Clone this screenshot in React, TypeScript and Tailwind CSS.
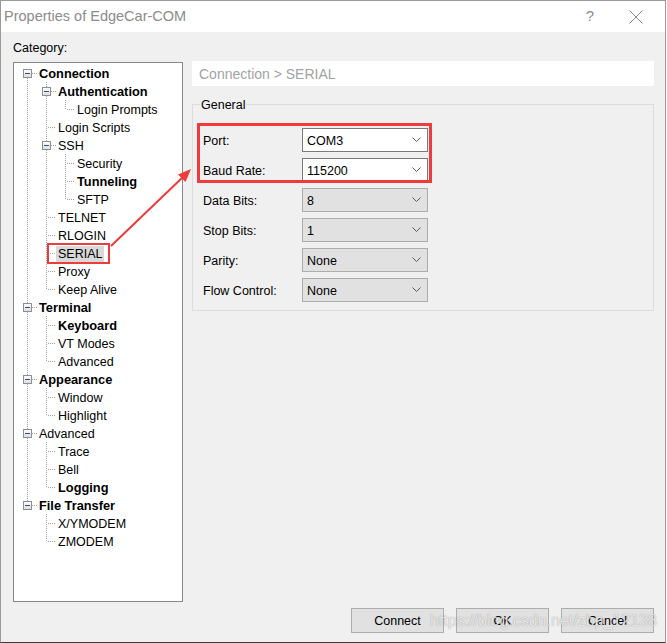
import React from "react";

type Node = { label: string; bold?: boolean; selected?: boolean; children?: Node[] };

const tree: Node[] = [
  {
    label: "Connection",
    bold: true,
    children: [
      { label: "Authentication", bold: true, children: [{ label: "Login Prompts" }] },
      { label: "Login Scripts" },
      { label: "SSH", children: [{ label: "Security" }, { label: "Tunneling", bold: true }, { label: "SFTP" }] },
      { label: "TELNET" },
      { label: "RLOGIN" },
      { label: "SERIAL", selected: true },
      { label: "Proxy" },
      { label: "Keep Alive" },
    ],
  },
  { label: "Terminal", bold: true, children: [{ label: "Keyboard", bold: true }, { label: "VT Modes" }, { label: "Advanced" }] },
  { label: "Appearance", bold: true, children: [{ label: "Window" }, { label: "Highlight" }] },
  { label: "Advanced", children: [{ label: "Trace" }, { label: "Bell" }, { label: "Logging", bold: true }] },
  { label: "File Transfer", bold: true, children: [{ label: "X/YMODEM" }, { label: "ZMODEM" }] },
];

type Row = {
  node: Node;
  level: number;
  guides: boolean[];
  top: boolean;
  bottom: boolean;
  expander: boolean;
};

function flatten(nodes: Node[], level: number, guides: boolean[], out: Row[]) {
  nodes.forEach((n, i) => {
    const isLast = i === nodes.length - 1;
    const isFirstRoot = level === 0 && i === 0;
    out.push({
      node: n,
      level,
      guides,
      top: !isFirstRoot,
      bottom: !isLast,
      expander: !!n.children,
    });
    if (n.children) flatten(n.children, level + 1, [...guides, !isLast], out);
  });
  return out;
}

const rows = flatten(tree, 0, [], []);
const DOT = "#a0a0a0";

function GuideCell({ on }: { on: boolean }) {
  return (
    <svg width="19" height="18" className="shrink-0" shapeRendering="crispEdges">
      {on && <line x1="9.5" y1="0" x2="9.5" y2="18" stroke={DOT} strokeDasharray="1 1" />}
    </svg>
  );
}

function NodeCell({ r }: { r: Row }) {
  return (
    <svg width="19" height="18" className="shrink-0" shapeRendering="crispEdges">
      <defs>
        <linearGradient id="exg" x1="0" y1="0" x2="0" y2="1">
          <stop offset="0" stopColor="#ffffff" />
          <stop offset="1" stopColor="#dcdcdc" />
        </linearGradient>
      </defs>
      {r.top && <line x1="9.5" y1="0" x2="9.5" y2={r.expander ? 5 : 9} stroke={DOT} strokeDasharray="1 1" />}
      {r.bottom && <line x1="9.5" y1={r.expander ? 14 : 10} x2="9.5" y2="18" stroke={DOT} strokeDasharray="1 1" />}
      <line x1={r.expander ? 14 : 11} y1="9.5" x2="19" y2="9.5" stroke={DOT} strokeDasharray="1 1" />
      {r.expander && (
        <>
          <rect x="5.5" y="5.5" width="8" height="8" fill="url(#exg)" stroke="#8e8f8f" />
          <line x1="7" y1="9.5" x2="12" y2="9.5" stroke="#2b4f8f" />
        </>
      )}
    </svg>
  );
}

function Chevron() {
  return (
    <svg width="10" height="6" className="shrink-0">
      <polyline points="0.5,0.5 4.5,4.5 8.5,0.5" fill="none" stroke="#5a5a5a" strokeWidth="1" />
    </svg>
  );
}

function Combo({ value, white }: { value: string; white?: boolean }) {
  return (
    <div
      className={
        white
          ? "w-[126px] h-[24px] border border-[#7a7a7a] bg-white flex items-center pl-[4px] pr-[5px]"
          : "w-[126px] h-[24px] border border-[#adadad] bg-[#e1e1e1] flex items-center pl-[4px] pr-[5px]"
      }
    >
      <span className="flex-1 text-[12.5px] text-black mt-[2px]">{value}</span>
      <Chevron />
    </div>
  );
}

const fields: { label: string; value: string; white?: boolean }[] = [
  { label: "Port:", value: "COM3", white: true },
  { label: "Baud Rate:", value: "115200", white: true },
  { label: "Data Bits:", value: "8" },
  { label: "Stop Bits:", value: "1" },
  { label: "Parity:", value: "None" },
  { label: "Flow Control:", value: "None" },
];

export default function App() {
  return (
    <div className="w-[667px] h-[643px] bg-white font-['Liberation_Sans',Arial,sans-serif]">
      <div className="relative w-[666px] h-[643px] border border-[#9a9a9a] border-b-[#3a3a3a] bg-[#f0f0f0] flex flex-col">
        {/* Title bar */}
        <div className="h-[31px] bg-white flex items-center pl-[3px] pr-[6px] shrink-0">
          <span className="text-[14.5px] text-[#8c8c8c]">Properties of EdgeCar-COM</span>
          <div className="ml-auto flex">
            <div className="w-[46px] h-[31px] flex items-center justify-center text-[15px] text-[#8c8c8c]">?</div>
            <div className="w-[46px] h-[31px] flex items-center justify-center">
              <svg width="14" height="14">
                <line x1="0.5" y1="0.5" x2="13.5" y2="13.5" stroke="#8c8c8c" strokeWidth="1" />
                <line x1="13.5" y1="0.5" x2="0.5" y2="13.5" stroke="#8c8c8c" strokeWidth="1" />
              </svg>
            </div>
          </div>
        </div>

        {/* Body */}
        <div className="flex pl-[12px] pr-[11px]">
          {/* Left column */}
          <div className="w-[170px] shrink-0 flex flex-col">
            <div className="h-[30px] pt-[8px] leading-[16px] text-[12.5px] text-black">Category:</div>
            <div className="h-[540px] border border-[#828790] bg-white pt-[1px] pl-[4px]">
              {rows.map((r, i) => (
                <div key={i} className="h-[18px] flex items-center">
                  {r.guides.map((g, j) => (
                    <GuideCell key={j} on={g} />
                  ))}
                  <NodeCell r={r} />
                  <span
                    className={
                      (r.node.bold ? "font-bold text-[12.8px] " : "text-[12.5px] mt-[2px] ") +
                      (r.node.selected ? "bg-[#d9d9d9] " : "") +
                      "px-[2px] leading-[17px] text-black whitespace-nowrap"
                    }
                  >
                    {r.node.label}
                  </span>
                </div>
              ))}
            </div>
          </div>

          {/* Right column */}
          <div className="ml-[9px] flex-1 flex flex-col">
            <div className="mt-[29px] h-[25px] bg-white flex items-center pl-[7px] text-[14px] text-[#a3a3a3]">
              <span className="mt-[2px]">Connection &gt; SERIAL</span>
            </div>
            <div className="relative mt-[18px] h-[207px] border border-[#dcdcdc] pt-[23px] pl-[10px]">
              <span className="absolute left-[7px] top-[-8px] bg-[#f0f0f0] px-[1px] text-[12.5px] leading-[16px] text-black">
                General
              </span>
              <div className="flex flex-col gap-[6px]">
                {fields.map((f) => (
                  <div key={f.label} className="flex items-center h-[24px]">
                    <span className="w-[99px] text-[12.5px] text-black mt-[2px]">{f.label}</span>
                    <Combo value={f.value} white={f.white} />
                  </div>
                ))}
              </div>
            </div>
          </div>
        </div>

        {/* Buttons */}
        <div className="mt-[6px] flex justify-end gap-[12px] pr-[11px]">
          {["Connect", "OK", "Cancel"].map((b) => (
            <div
              key={b}
              className="w-[93px] h-[25px] border border-[#adadad] bg-[#e1e1e1] flex items-center justify-center text-[12.5px] text-black"
            >
              <span className="mt-[2px]">{b}</span>
            </div>
          ))}
        </div>

        {/* Annotations */}
        <div className="absolute left-[46px] top-[242px] w-[63px] h-[21px] border-2 border-[#ef3b3b] pointer-events-none" />
        <div className="absolute left-[196px] top-[122px] w-[235px] h-[60px] border-[3px] border-[#ef3b3b] pointer-events-none" />
        <svg className="absolute left-[-1px] top-[-1px] pointer-events-none" width="667" height="643">
          <line x1="111" y1="246" x2="183" y2="177" stroke="#ef3b3b" strokeWidth="2" />
          <polygon points="191,169 185.5,182 178,174.5" fill="#ef3b3b" />
        </svg>
        <div className="absolute left-[429px] top-[610px] text-[16px] leading-[20px] text-[rgba(255,255,255,0.8)] [text-shadow:0_0_1px_rgba(0,0,0,0.45)] pointer-events-none whitespace-nowrap">
          https://blog.csdn.net/zbp_12138
        </div>
      </div>
    </div>
  );
}
